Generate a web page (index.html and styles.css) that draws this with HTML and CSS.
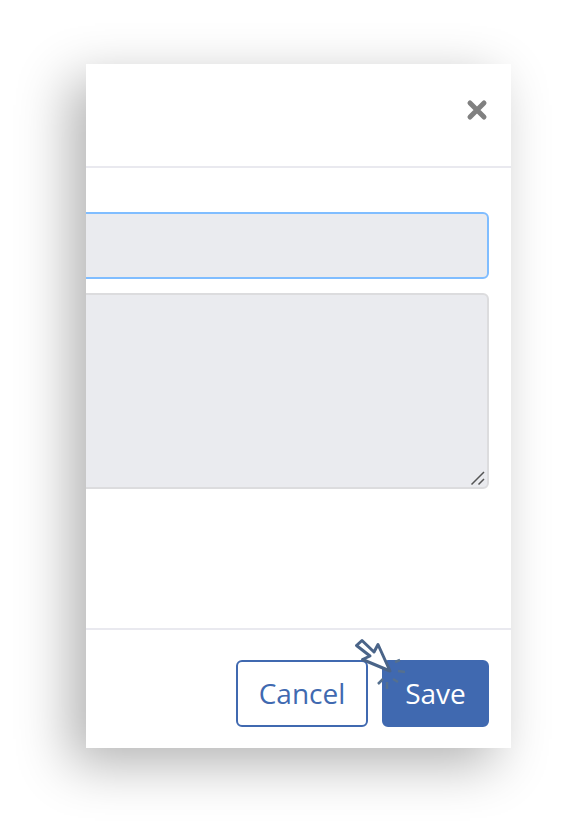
FILE: index.html
```html
<!DOCTYPE html>
<html lang="en">
<head>
    <meta charset="UTF-8">
    <title>Edit</title>
    <link rel="stylesheet" href="styles.css">
</head>
<body>
    <div class="dialog">
        <div class="dialog-header">
            <svg class="close-icon" width="22" height="22" viewBox="0 0 22 22">
                <path d="M4 4L18 18M18 4L4 18" stroke="#808080" stroke-width="5" stroke-linecap="round" fill="none"/>
            </svg>
        </div>
        <div class="dialog-body">
            <div class="field field-focus"></div>
            <div class="field field-area">
                <svg class="resize-grip" width="16" height="16" viewBox="0 0 16 16">
                    <path d="M1.5 14.5L14 2M8.5 14.5L14 9" stroke="#555" stroke-width="1.5" fill="none"/>
                </svg>
            </div>
        </div>
        <div class="dialog-footer">
            <button class="btn btn-cancel">Cancel</button>
            <button class="btn btn-save">Save</button>
        </div>
        <!-- pointer over the save button -->
        <svg class="pointer" width="60" height="60" viewBox="0 0 60 60">
            <path d="M6.5 13.5L12 8.5L24 20L28 12.5L40 39L12.5 27.5L20 24Z" fill="#fff" stroke="#4a6488" stroke-width="3" stroke-linejoin="round"/>
            <path d="M45 30L50 28M48 39L55 40M43 47L48 50M37 50L37 57M28 52L33 47" stroke="#55708f" stroke-width="2.5" fill="none"/>
        </svg>
    </div>
</body>
</html>
```

FILE: styles.css
```css
* {
    margin: 0;
    padding: 0;
    box-sizing: border-box;
}

html, body {
    height: 100%;
    overflow: hidden;
    background: #fff;
}

.dialog {
    position: relative;
    display: flex;
    flex-direction: column;
    width: 425px;
    height: 684px;
    margin: 64px 0 0 86px;
    background: #fff;
    box-shadow: -16px 16px 50px rgba(0, 0, 0, 0.3);
    font-family: "Open Sans", "Liberation Sans", sans-serif;
}

.dialog-header {
    display: flex;
    justify-content: flex-end;
    align-items: center;
    height: 104px;
    padding: 0 23px 10px 0;
    border-bottom: 2px solid #e9e9ef;
}

.dialog-body {
    flex: 1;
    display: flex;
    flex-direction: column;
    gap: 14px;
    padding: 44px 22px 0 0;
    overflow: hidden;
}

.field {
    height: 67px;
    margin-left: -20px;
    background: #eaebef;
    border: 2px solid #dcdcde;
    border-radius: 6px;
}

.field-focus {
    border-color: #80bdff;
}

.field-area {
    position: relative;
    height: 196px;
}

.resize-grip {
    position: absolute;
    right: 1px;
    bottom: 1px;
}

.dialog-footer {
    display: flex;
    justify-content: flex-end;
    gap: 14px;
    height: 120px;
    padding: 30px 22px 0 0;
    border-top: 2px solid #e9e9ef;
}

.btn {
    height: 67px;
    padding-bottom: 2px;
    border-radius: 6px;
    font-family: inherit;
    font-size: 28px;
}

.btn-cancel {
    width: 132px;
    background: #fff;
    color: #4069b0;
    border: 2px solid #4069b0;
}

.btn-save {
    width: 107px;
    background: #4069b0;
    color: #fff;
    border: 2px solid #4069b0;
}

.pointer {
    position: absolute;
    left: 264px;
    top: 568px;
}
```
